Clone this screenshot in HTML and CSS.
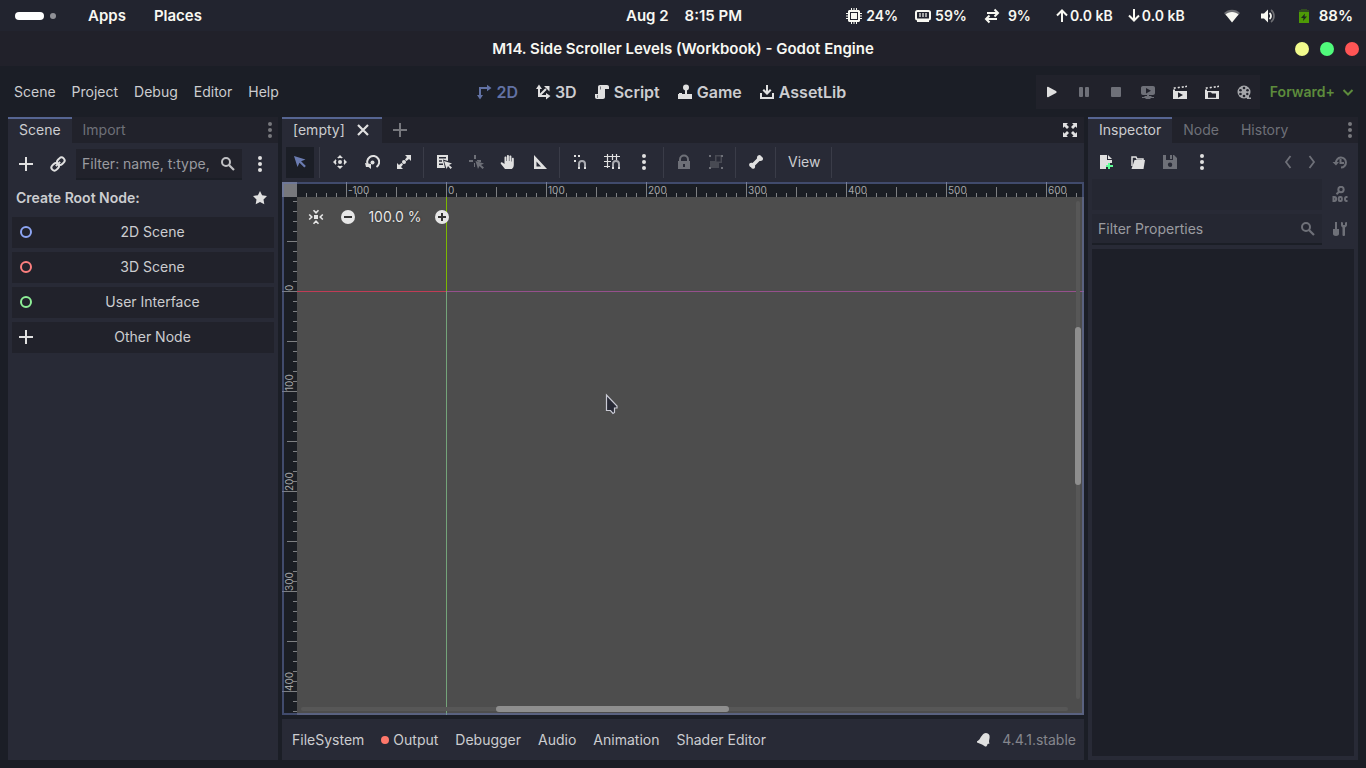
FILE: index.html
```html
<!DOCTYPE html>
<html lang="en">
<head>
<meta charset="utf-8">
<title>M14. Side Scroller Levels (Workbook) - Godot Engine</title>
<link rel="stylesheet" href="styles.css">
</head>
<body>
<svg class="sprite" aria-hidden="true">
  <symbol id="plus" viewBox="0 0 16 16"><path d="M7 1h2v6h6v2H9v6H7V9H1V7h6z"/></symbol>
  <symbol id="link" viewBox="0 0 16 16"><g fill="none" stroke="currentColor" stroke-width="2" transform="rotate(-45 8 8)"><rect x="0" y="5" width="8" height="6" rx="3"/><rect x="8" y="5" width="8" height="6" rx="3"/><path d="M5 8h6"/></g></symbol>
  <symbol id="search" viewBox="0 0 16 16"><circle cx="6" cy="6" r="4" fill="none" stroke="currentColor" stroke-width="2"/><path d="M9 9l5 5" stroke="currentColor" stroke-width="2.200"/></symbol>
  <symbol id="dots" viewBox="0 0 16 16"><circle cx="8" cy="2" r="2"/><circle cx="8" cy="8" r="2"/><circle cx="8" cy="14" r="2"/></symbol>
  <symbol id="star" viewBox="0 0 16 16"><path d="M8 1l2.100 4.300 4.900.7-3.500 3.400.8 4.900L8 12.100l-4.300 2.200.8-4.900L1 6l4.900-.7z"/></symbol>
  <symbol id="ring" viewBox="0 0 16 16"><circle cx="8" cy="8" r="5" fill="none" stroke="currentColor" stroke-width="2"/></symbol>
  <symbol id="close" viewBox="0 0 16 16"><path d="M3 3l10 10M13 3L3 13" stroke="currentColor" stroke-width="2.200"/></symbol>
  <symbol id="expand" viewBox="0 0 16 16"><path d="M1 1h5L4.500 2.500 7 5 5 7 2.500 4.500 1 6zM15 1v5l-1.500-1.500L11 7 9 5l2.500-2.500L10 1zM1 15v-5l1.500 1.500L5 9l2 2-2.500 2.500L6 15zM15 15h-5l1.500-1.500L9 11l2-2 2.500 2.500L15 10z"/></symbol>
  <symbol id="select" viewBox="0 0 16 16"><path d="M2 2l3.500 11 2-4.200 4.800 4.800 1.600-1.600-4.800-4.700L13.500 5.500z"/></symbol>
  <symbol id="move" viewBox="0 0 16 16"><circle cx="8" cy="8" r="2"/><path d="M8 1L5 4h1v1h4V4h1zM8 15l-3-3h1v-1h4v1h1zM1 8l3-3v1h1v4H4v1zM15 8l-3-3v1h-1v4h1v1z"/><circle cx="8" cy="8" r="3.400" fill="none" stroke="#282a36" stroke-width="1.200"/></symbol>
  <symbol id="rotate" viewBox="0 0 16 16"><circle cx="8.500" cy="8.500" r="2"/><path d="M4.300 11.500A6 6 0 1 1 12.500 13" fill="none" stroke="currentColor" stroke-width="2"/><path d="M1 9l6 1v5l-2.500-2H2z"/></symbol>
  <symbol id="scale" viewBox="0 0 16 16"><circle cx="8" cy="8" r="2"/><path d="M9 1h6v6l-2-2-2.500 2L9 5.500 11 3zM1 9v6h6l-2-2 2-2.500L5.500 9 3 11z"/></symbol>
  <symbol id="list" viewBox="0 0 16 16"><path fill-rule="evenodd" d="M1 1h11v6l-5-1.500L9 14H1zM3 3v1.500h7V3zm0 3.200v1.500h3V6.200zm0 3.200v1.500h4V9.400z"/><path d="M8 7l2.500 8 1.500-3 2.500 3 1.500-1.500-3-2.500 3-1.500z"/></symbol>
  <symbol id="pivot" viewBox="0 0 16 16"><path d="M6 1h2v4H6zM1 6h4v2H1zM9 6h4v2H9zM6 9h1v4H6zM7.500 7l2.500 8 1.500-3 3 3 1.500-1.500-3-2.500 3-1.500z"/></symbol>
  <symbol id="hand" viewBox="0 0 16 16"><path d="M5 15l-4-5c-1-1.500.8-2.500 1.800-1.300L4.500 10V3.500c0-1.300 1.900-1.300 1.900 0V7h.5V2c0-1.300 2-1.300 2 0v5h.5V2.500c0-1.300 2-1.300 2 0v5h.5V4.800c0-1.300 1.900-1.300 1.900 0V11c0 2-1 3-2 4z"/></symbol>
  <symbol id="ruler" viewBox="0 0 16 16"><path fill-rule="evenodd" d="M2 1v14h13zm2.500 6.500l4.500 5H4.500z"/></symbol>
  <symbol id="smart" viewBox="0 0 16 16"><path d="M2 1h2v2H2zM6 1h2v2H6zM2 6h2v2H2z"/><path d="M7 13v-3a3 3 0 0 1 6 0v3" fill="none" stroke="#a9aab0" stroke-width="2"/><path d="M6 13h2v2H6zM12 13h2v2h-2z"/></symbol>
  <symbol id="grid" viewBox="0 0 16 16"><path d="M3.500 0v14M8.500 0v6M12.500 0v6M0 2.500h16M0 7.500h7M0 12.500h6" stroke="currentColor" stroke-width="1.200"/><path d="M9 13v-3a3 3 0 0 1 6 0v3" fill="none" stroke="#a9aab0" stroke-width="2"/><path d="M8 13h2v2H8zM14 13h2v2h-2z"/></symbol>
  <symbol id="lock" viewBox="0 0 16 16"><path fill-rule="evenodd" d="M3 7V5.500a5 5 0 0 1 10 0V7h1v8H2V7zm2 0h6V5.500a3 3 0 0 0-6 0zm2 3v3h2v-3z"/></symbol>
  <symbol id="group" viewBox="0 0 16 16"><path d="M1 1h2v2H1zM13 1h2v2h-2zM1 13h2v2H1zM13 13h2v2h-2z"/><path opacity=".45" fill-rule="evenodd" d="M7 1h7v8h-3v5H2V7h5zm1.500 1.500v5h4v-5z"/></symbol>
  <symbol id="bone" viewBox="0 0 16 16"><path d="M10 1.500a2.500 2.500 0 0 1 3.500 1 2.500 2.500 0 0 1 1 3.800c-1 1-2.500.7-3 .7L7 11.500c.3 1.500 0 3-1.500 3.200A2.500 2.500 0 0 1 3 13.200 2.500 2.500 0 0 1 1.500 9.500c1-1 2.300-.7 3-.5L9 4.500c-.2-1 .1-2.300 1-3z"/></symbol>
  <symbol id="center" viewBox="0 0 16 16"><path d="M6 6h4v4H6z"/><path d="M5.500 1.200L8 3.800l2.500-2.600M5.500 14.800L8 12.200l2.500 2.600M1.200 5.500L3.800 8l-2.600 2.500M14.800 5.500L12.200 8l2.600 2.500" fill="none" stroke="currentColor" stroke-width="1.600"/></symbol>
  <symbol id="minus-round" viewBox="0 0 16 16"><circle cx="8" cy="8" r="7"/><path d="M4 7h8v2H4z" fill="#333"/></symbol>
  <symbol id="plus-round" viewBox="0 0 16 16"><circle cx="8" cy="8" r="7"/><path d="M7 4h2v3h3v2H9v3H7V9H4V7h3z" fill="#333"/></symbol>
  <symbol id="two" viewBox="0 0 16 16"><path d="M4 12V4h8" fill="none" stroke="currentColor" stroke-width="2"/><path d="M1 11h6l-3 4.500zM11 .8L15.500 4 11 7.200z"/></symbol>
  <symbol id="three" viewBox="0 0 16 16"><path d="M4 4v8h8M4 12l7-7" fill="none" stroke="currentColor" stroke-width="2"/><path d="M1 5l3-4.500L7 5zM11 9l4.500 3-4.500 3.500zM9 2h5.500v5.500z"/></symbol>
  <symbol id="script" viewBox="0 0 16 16"><path d="M6 1c-1.200 0-2 .8-2 2v7H1v3c0 1.200.8 2 2 2h6c1.200 0 2-.8 2-2V5h4V3c0-1.200-.8-2-2-2z"/><path d="M6.500 2.500v3M3.500 11v3" stroke="#777a80"/></symbol>
  <symbol id="game" viewBox="0 0 16 16"><circle cx="9" cy="3.500" r="3"/><path d="M8 5h2v5h5v5H1v-5h1V9h3v1h3z"/></symbol>
  <symbol id="asset" viewBox="0 0 16 16"><path d="M1 9h2v4h10V9h2v6H1z"/><path d="M7 1h2v6l2-2 1.500 1.500L8 11 3.500 6.500 5 5l2 2z"/></symbol>
  <symbol id="play" viewBox="0 0 16 16"><path d="M3 3.500c0-1 .8-1 1.500-.6l7.500 4c.8.500.8 1.700 0 2.200l-7.500 4c-.7.400-1.500.2-1.500-.6z"/></symbol>
  <symbol id="pause" viewBox="0 0 16 16"><rect x="3" y="3" width="4" height="10" rx="1"/><rect x="9" y="3" width="4" height="10" rx="1"/></symbol>
  <symbol id="stop" viewBox="0 0 16 16"><rect x="3" y="3" width="10" height="10" rx="1"/></symbol>
  <symbol id="remote" viewBox="0 0 16 16"><path fill-rule="evenodd" d="M3 2h10c1.200 0 2 .8 2 2v5c0 1.200-.8 2-2 2H9v1h2l1 1h2v1h-3l-1 1H6l-1-1H2v-1h2l1-1h2v-1H3c-1.200 0-2-.8-2-2V4c0-1.200.8-2 2-2zm3 2v5.500l5-2.700z"/></symbol>
  <symbol id="clap-play" viewBox="0 0 16 16"><path fill-rule="evenodd" d="M1 7h14v8H1zm5 1.200v5.600l5-2.800z"/><path d="M1.500 3.500l2-.5.500 1.500-2 .5zM5.500 3l2-.5.500 1.500-2 .5zM9.500 2.500l2-.5.500 1.500-2 .5zM13 2l2-.5v1.500l-1.500.500zM1 5.500h2V7H1z"/></symbol>
  <symbol id="clap-file" viewBox="0 0 16 16"><path fill-rule="evenodd" d="M1 7h14v8H1zm3 1.200v5.600h8V9.500H8L7 8.200z"/><path d="M1.500 3.500l2-.5.500 1.500-2 .5zM5.500 3l2-.5.500 1.500-2 .5zM9.500 2.500l2-.5.500 1.500-2 .5zM13 2l2-.5v1.500l-1.500.500zM1 5.500h2V7H1z"/></symbol>
  <symbol id="reel" viewBox="0 0 16 16"><circle cx="8" cy="8" r="6.500"/><path d="M10 10h3v3.500h2V15h-4z"/><g fill="#22232c"><circle cx="8" cy="4" r="1.300"/><circle cx="4.500" cy="6.200" r="1.300"/><circle cx="11.500" cy="6.200" r="1.300"/><circle cx="4.500" cy="10" r="1.300"/><circle cx="8" cy="12" r="1.300"/><circle cx="11.300" cy="10" r="1.200"/></g></symbol>
  <symbol id="chevron" viewBox="0 0 16 16"><path d="M3.500 6L8 10.500 12.500 6" fill="none" stroke="currentColor" stroke-width="2"/></symbol>
  <symbol id="new-file" viewBox="0 0 16 16"><path d="M2 1h7v5h5v3h-4v2H8v4H2zM10 1l4 4h-4z"/><path d="M10 9h2v2h3v2h-3v2h-2v-2H8v-2h2z" fill="#5fff97"/></symbol>
  <symbol id="folder" viewBox="0 0 16 16"><path d="M2 12V3h4l1 2h6v2" fill="none" stroke="currentColor" stroke-width="1.500"/><path d="M4.500 6H15l-1.500 9H1.500z"/></symbol>
  <symbol id="save" viewBox="0 0 16 16"><path fill-rule="evenodd" d="M1 1h3v5h7V1h1l3 3v11H1zm7 7.500a2.200 2.200 0 1 0 .1 4.400A2.200 2.200 0 0 0 8 8.500zM8 1h2v4H8z"/></symbol>
  <symbol id="back" viewBox="0 0 16 16"><path d="M10.500 2L6 8l4.500 6" fill="none" stroke="currentColor" stroke-width="1.800"/></symbol>
  <symbol id="forward" viewBox="0 0 16 16"><path d="M5.500 2L10 8l-4.500 6" fill="none" stroke="currentColor" stroke-width="1.800"/></symbol>
  <symbol id="history" viewBox="0 0 16 16"><path d="M4 9a5 5 0 1 1 5 4.500M8.500 5v4H12" fill="none" stroke="currentColor" stroke-width="2"/><path d="M.5 8h6.500L4 11.500z"/></symbol>
  <symbol id="docs" viewBox="0 0 16 16"><g fill="none" stroke="currentColor" stroke-width="2"><circle cx="9" cy="3.500" r="2.700"/><path d="M7.200 5.500L4.500 8.200"/><path d="M1.500 11h1c2.200 0 2.200 4 0 4h-1zM15.500 11h-1c-2 0-2 4 0 4h1"/><rect x="6.800" y="11" width="3" height="4" rx="1"/></g></symbol>
  <symbol id="tools" viewBox="0 0 16 16"><path d="M3 1h2v7h2v5c0 2.500-6 2.500-6 0V8h2zM9 1v3c0 1.300.7 2 1.500 2.500V14c0 1.300 2.500 1.300 2.500 0V6.500C14 6 15 5 15 4V1l-2 .5V4h-2V1.500z"/></symbol>
  <symbol id="bell" viewBox="0 0 16 16"><path d="M8 1.500c2-1.500 5 0 5.500 2 .5 2.500-.5 4-.5 6.500l.5 1.500-2 .5c0 2-2 3.500-3 2L6 12.500 1 10.500V9.300C4 8.500 4.500 4 8 1.500z"/></symbol>
  <symbol id="cpu" viewBox="0 0 16 16"><path fill-rule="evenodd" d="M5 0h1v2h1.500V0h1v2H10V0h1v2h2l1 1v2h2v1h-2v1.500h2v1h-2V10h2v1h-2v2l-1 1h-2v2h-1v-2H8.500v2h-1v-2H6v2H5v-2H3l-1-1v-2H0v-1h2V8.500H0v-1h2V6H0V5h2V3l1-1h2zM4 4v8h8V4z"/><path d="M5 5h6v6H5z"/></symbol>
  <symbol id="memory" viewBox="0 0 16 16"><rect x="1" y="3" width="14" height="8.500" rx="1.500" fill="none" stroke="currentColor" stroke-width="2"/><path d="M2 11h12v3H2z"/><path opacity=".6" d="M4 5h2v4H4zM7 5h2v4H7zM10 5h2v4h-2z"/></symbol>
  <symbol id="swap" viewBox="0 0 16 16"><path d="M3 5h11M10.500 1.500L14 5l-3.500 3.500M13 11H2M5.500 7.500L2 11l3.500 3.500" fill="none" stroke="currentColor" stroke-width="2"/></symbol>
  <symbol id="up" viewBox="0 0 16 16"><path d="M8 14V3M3 7.500l5-5 5 5" fill="none" stroke="currentColor" stroke-width="2"/></symbol>
  <symbol id="down" viewBox="0 0 16 16"><path d="M8 1v11M3 7.500l5 5 5-5" fill="none" stroke="currentColor" stroke-width="2"/></symbol>
  <symbol id="wifi" viewBox="0 0 16 16"><path opacity=".35" d="M0 5c4-4.500 12-4.500 16 0l-2 2.500H2z"/><path d="M1.500 6.500c3-3.500 10-3.500 13 0L8 14.500z"/></symbol>
  <symbol id="volume" viewBox="0 0 16 16"><path d="M1 5.500h3L8 1.500v13l-4-4H1z"/><path d="M9.500 5c2 1.500 2 4.500 0 6" fill="none" stroke="currentColor" stroke-width="1.800"/><path opacity=".35" d="M11 2c4 3 4 9 0 12" fill="none" stroke="currentColor" stroke-width="1.600"/></symbol>
  <symbol id="battery" viewBox="0 0 16 16"><path opacity=".35" d="M5 1h6v1h2v3H3V2h2z"/><path d="M3 4h10v11H3z"/><path d="M9 5.500L5 10h2.500L7 13l4-4.500H8.500z" fill="#1c2a1c"/></symbol>
</svg>

<header class="sysbar">
  <nav class="sysbar-left">
    <span class="spaces"><i class="space-now"></i><i class="space-other"></i></span>
    <button class="sys-item">Apps</button>
    <button class="sys-item">Places</button>
  </nav>
  <div class="clock"><span>Aug 2</span><span>8:15 PM</span></div>
  <div class="sysbar-right">
    <span class="stat"><svg class="icon"><use href="#cpu"/></svg>24%</span>
    <span class="stat"><svg class="icon"><use href="#memory"/></svg>59%</span>
    <span class="stat wide"><svg class="icon"><use href="#swap"/></svg>9%</span>
    <span class="net"><span class="rate"><svg class="icon"><use href="#up"/></svg>0.0 kB</span><span class="rate"><svg class="icon"><use href="#down"/></svg>0.0 kB</span></span>
    <span class="tray"><svg class="icon"><use href="#wifi"/></svg><svg class="icon"><use href="#volume"/></svg><span class="power"><svg class="icon battery"><use href="#battery"/></svg>88%</span></span>
  </div>
</header>

<div class="titlebar">
  <h1 class="title">M14. Side Scroller Levels (Workbook) - Godot Engine</h1>
  <div class="window-buttons">
    <button class="win minimize" aria-label="Minimize"></button>
    <button class="win maximize" aria-label="Maximize"></button>
    <button class="win shut" aria-label="Close"></button>
  </div>
</div>

<div class="editor">
  <div class="menubar">
    <nav class="menus">
      <button>Scene</button><button>Project</button><button>Debug</button><button>Editor</button><button>Help</button>
    </nav>
    <nav class="modes">
      <button class="current"><svg class="icon"><use href="#two"/></svg>2D</button>
      <button><svg class="icon"><use href="#three"/></svg>3D</button>
      <button><svg class="icon"><use href="#script"/></svg>Script</button>
      <button><svg class="icon"><use href="#game"/></svg>Game</button>
      <button><svg class="icon"><use href="#asset"/></svg>AssetLib</button>
    </nav>
    <div class="run">
      <div class="run-buttons">
        <button aria-label="Play"><svg class="icon"><use href="#play"/></svg></button>
        <button class="off" aria-label="Pause"><svg class="icon"><use href="#pause"/></svg></button>
        <button class="off" aria-label="Stop"><svg class="icon"><use href="#stop"/></svg></button>
        <button class="off" aria-label="Remote deploy"><svg class="icon"><use href="#remote"/></svg></button>
        <button aria-label="Play scene"><svg class="icon"><use href="#clap-play"/></svg></button>
        <button aria-label="Play custom scene"><svg class="icon"><use href="#clap-file"/></svg></button>
        <button class="dim" aria-label="Movie maker"><svg class="icon"><use href="#reel"/></svg></button>
      </div>
      <button class="renderer">Forward+<svg class="icon"><use href="#chevron"/></svg></button>
    </div>
  </div>

  <main class="docks">
    <section class="dock">
      <div class="tabs">
        <button class="tab active">Scene</button><button class="tab">Import</button>
        <button class="tab-menu" aria-label="Dock options"><svg class="icon"><use href="#dots"/></svg></button>
      </div>
      <div class="scene-body">
        <div class="tools">
          <button class="tool" aria-label="Add node"><svg class="icon"><use href="#plus"/></svg></button>
          <button class="tool" aria-label="Instance scene"><svg class="icon"><use href="#link"/></svg></button>
          <label class="field"><input type="text" aria-label="Filter nodes" placeholder="Filter: name, t:type,"><svg class="icon"><use href="#search"/></svg></label>
          <button class="tool" aria-label="More options"><svg class="icon"><use href="#dots"/></svg></button>
        </div>
        <div class="root-head"><h2>Create Root Node:</h2><button class="tool" aria-label="Favorites"><svg class="icon"><use href="#star"/></svg></button></div>
        <button class="root-button"><svg class="icon blue"><use href="#ring"/></svg><span>2D Scene</span></button>
        <button class="root-button"><svg class="icon red"><use href="#ring"/></svg><span>3D Scene</span></button>
        <button class="root-button"><svg class="icon green"><use href="#ring"/></svg><span>User Interface</span></button>
        <button class="root-button"><svg class="icon"><use href="#plus"/></svg><span>Other Node</span></button>
      </div>
    </section>

    <div class="middle">
      <section class="dock canvas-dock">
        <div class="tabs">
          <button class="tab active scene-tab">[empty]<svg class="icon"><use href="#close"/></svg></button>
          <button class="tab-add" aria-label="New scene"><svg class="icon"><use href="#plus"/></svg></button>
          <button class="tab-menu bright" aria-label="Distraction free mode"><svg class="icon"><use href="#expand"/></svg></button>
        </div>
        <div class="tools canvas-tools">
          <button class="tool pressed" aria-label="Select"><svg class="icon"><use href="#select"/></svg></button>
          <i class="sep"></i>
          <button class="tool" aria-label="Move"><svg class="icon"><use href="#move"/></svg></button>
          <button class="tool" aria-label="Rotate"><svg class="icon"><use href="#rotate"/></svg></button>
          <button class="tool" aria-label="Scale"><svg class="icon"><use href="#scale"/></svg></button>
          <i class="sep"></i>
          <button class="tool" aria-label="List selectable nodes"><svg class="icon"><use href="#list"/></svg></button>
          <button class="tool off" aria-label="Change pivot"><svg class="icon"><use href="#pivot"/></svg></button>
          <button class="tool" aria-label="Pan"><svg class="icon"><use href="#hand"/></svg></button>
          <button class="tool" aria-label="Ruler"><svg class="icon"><use href="#ruler"/></svg></button>
          <i class="sep"></i>
          <button class="tool" aria-label="Smart snap"><svg class="icon"><use href="#smart"/></svg></button>
          <button class="tool" aria-label="Grid snap"><svg class="icon"><use href="#grid"/></svg></button>
          <button class="tool" aria-label="Snapping options"><svg class="icon"><use href="#dots"/></svg></button>
          <i class="sep"></i>
          <button class="tool off" aria-label="Lock"><svg class="icon"><use href="#lock"/></svg></button>
          <button class="tool off" aria-label="Group"><svg class="icon"><use href="#group"/></svg></button>
          <i class="sep"></i>
          <button class="tool" aria-label="Skeleton options"><svg class="icon"><use href="#bone"/></svg></button>
          <i class="sep"></i>
          <button class="view">View</button>
          <i class="sep"></i>
        </div>
        <div class="viewport">
          <div class="corner"></div>
          <div class="ruler-x"><span>-100</span><span>0</span><span>100</span><span>200</span><span>300</span><span>400</span><span>500</span><span>600</span></div>
          <div class="ruler-y"><span>0</span><span>100</span><span>200</span><span>300</span><span>400</span></div>
          <div class="canvas">
            <i class="axis-x"></i><i class="axis-y"></i>
            <div class="zoom">
              <button aria-label="Center view"><svg class="icon"><use href="#center"/></svg></button>
              <button aria-label="Zoom out"><svg class="icon"><use href="#minus-round"/></svg></button>
              <button class="zoom-value">100.0 %</button>
              <button aria-label="Zoom in"><svg class="icon"><use href="#plus-round"/></svg></button>
            </div>
            <svg class="pointer" viewBox="0 0 14 22"><path d="M1.500 2v15.500h4l2.500 3 1.500-1v-4.500h2.500v-2z" fill="#282a36" stroke="#c9cad4" stroke-width="1.200"/></svg>
            <div class="scroll-x"><i></i></div>
            <div class="scroll-y"><i></i></div>
          </div>
        </div>
      </section>
      <footer class="bottom">
        <button>FileSystem</button><button><i class="alert"></i>Output</button><button>Debugger</button><button>Audio</button><button>Animation</button><button>Shader Editor</button>
        <span class="status"><button aria-label="Notifications"><svg class="icon"><use href="#bell"/></svg></button><a class="version" href="#">4.4.1.stable</a></span>
      </footer>
    </div>

    <section class="dock">
      <div class="tabs">
        <button class="tab active">Inspector</button><button class="tab">Node</button><button class="tab">History</button>
        <button class="tab-menu" aria-label="Dock options"><svg class="icon"><use href="#dots"/></svg></button>
      </div>
      <div class="inspector-body">
        <div class="tools inspector-tools">
          <button class="tool" aria-label="New resource"><svg class="icon"><use href="#new-file"/></svg></button>
          <button class="tool" aria-label="Load resource"><svg class="icon"><use href="#folder"/></svg></button>
          <button class="tool off" aria-label="Save resource"><svg class="icon"><use href="#save"/></svg></button>
          <button class="tool" aria-label="Resource options"><svg class="icon"><use href="#dots"/></svg></button>
          <button class="tool narrow push off" aria-label="Previous object"><svg class="icon"><use href="#back"/></svg></button>
          <button class="tool narrow off" aria-label="Next object"><svg class="icon"><use href="#forward"/></svg></button>
          <button class="tool off" aria-label="Object history"><svg class="icon"><use href="#history"/></svg></button>
        </div>
        <div class="tools"><button class="object-path" aria-label="Edited object"></button><button class="tool off" aria-label="Open documentation"><svg class="icon"><use href="#docs"/></svg></button></div>
        <div class="tools"><label class="field muted"><input type="text" aria-label="Filter properties" placeholder="Filter Properties"><svg class="icon"><use href="#search"/></svg></label><button class="tool off" aria-label="Property tools"><svg class="icon"><use href="#tools"/></svg></button></div>
        <div class="properties"></div>
      </div>
    </section>
  </main>
</div>
</body>
</html>
```

FILE: styles.css
```css
:root {
  --base: #1b1e26;
  --bar: #21222b;
  --panel: #282a36;
  --accent: #566592;
  --text: #cccdd0;
  --icon: #e0e0e0;
  --off: #6e7078;
}
* { box-sizing: border-box; }
body {
  margin: 0;
  height: 100vh;
  display: flex;
  flex-direction: column;
  background: var(--base);
  color: var(--text);
  font: 14px/20px Inter, "Noto Sans", sans-serif;
  overflow: hidden;
}
button, input { font: inherit; color: inherit; background: none; border: 0; padding: 0; }
button { display: inline-flex; align-items: center; justify-content: center; white-space: nowrap; }
.sprite { position: absolute; width: 0; height: 0; }
.icon { width: 16px; height: 16px; flex: none; fill: currentColor; display: block; }

.sysbar {
  display: grid;
  grid-template-columns: 1fr auto 1fr;
  align-items: center;
  height: 31px;
  flex: none;
  padding: 0 13px 0 15px;
  background: #22242f;
  color: #f8f8f2;
  font-size: 15px;
  font-weight: 600;
}
.sysbar-left, .sysbar-right, .clock, .spaces, .stat, .net, .rate, .tray, .power { display: flex; align-items: center; }
.sysbar-left { gap: 28px; }
.spaces { gap: 6px; margin-right: 4px; }
.space-now { width: 29px; height: 8px; border-radius: 4px; background: #fff; }
.space-other { width: 6px; height: 6px; border-radius: 3px; background: #909197; }
.clock { gap: 16px; }
.sysbar-right { justify-content: flex-end; gap: 17px; }
.stat, .rate { font-size: 14px; gap: 4px; }
.wide { gap: 8px; }
.net { gap: 13px; padding-left: 6px; }
.rate { gap: 0; }
.tray { gap: 20px; padding-left: 22px; font-size: 15px; }
.power { gap: 7px; }
.battery { color: #4e9a06; }

.titlebar {
  display: grid;
  grid-template-columns: 1fr auto 1fr;
  align-items: center;
  height: 35px;
  flex: none;
  padding: 0 7px;
  background: #21212a;
}
.title { grid-column: 2; margin: 0; font-size: 15px; line-height: 20px; font-weight: 600; color: #f8f8f2; }
.window-buttons { display: flex; gap: 11px; justify-self: end; }
.win { width: 14px; height: 14px; border-radius: 50%; }
.minimize { background: #f1fa8c; }
.maximize { background: #50fa7b; }
.shut { background: #ff5555; }

.editor { flex: 1; min-height: 0; display: flex; flex-direction: column; padding: 0 8px 8px; }
.menubar { display: flex; align-items: center; justify-content: space-between; height: 51px; flex: none; }
.menus { display: flex; gap: 16px; padding-left: 6px; }
.modes { display: flex; gap: 17px; margin-left: 8px; font-size: 16px; font-weight: 600; }
.modes button { gap: 4px; }
.modes .icon { color: var(--icon); }
.modes .current, .modes .current .icon { color: #6272a4; }
.run { display: flex; align-items: center; gap: 10px; }
.run-buttons { display: flex; height: 34px; background: var(--bar); color: var(--icon); }
.run-buttons button { width: 32px; }
.run-buttons .off, .tool.off { color: var(--off); }
.run-buttons .dim { color: #a5a6aa; }
.renderer { gap: 5px; padding-right: 2px; font-weight: 600; color: #5d8c3c; }

.docks { flex: 1; min-height: 0; display: grid; grid-template-columns: 270px minmax(0, 1fr) 270px; gap: 4px; }
.dock { display: flex; flex-direction: column; background: var(--panel); min-height: 0; }
.tabs { display: flex; height: 26px; flex: none; background: var(--bar); }
.tab { padding: 0 11px 2px; border-top: 2px solid transparent; color: var(--off); }
.tab.active { background: var(--panel); border-top-color: var(--accent); color: var(--text); }
.scene-tab { gap: 10px; }
.scene-tab .icon { color: var(--icon); }
.tab-add { width: 36px; color: #77787d; }
.tab-menu { margin-left: auto; width: 16px; color: #77787d; }
.tab-menu.bright { width: 28px; color: var(--icon); }

.tools { display: flex; gap: 4px; height: 31px; flex: none; }
.tool { width: 28px; flex: none; padding-bottom: 1px; color: var(--icon); }
.scene-body { display: flex; flex-direction: column; gap: 4px; padding: 6px 4px; }
.field { display: flex; align-items: center; flex: 1; min-width: 0; padding: 0 6px; background: var(--bar); border-bottom: 2px solid var(--base); }
.field input { flex: 1; min-width: 0; width: 0; outline: 0; }
.field input::placeholder { color: #9a9ba0; opacity: 1; }
.field .icon { color: #c0c1c4; }
.root-head { display: flex; align-items: center; justify-content: space-between; height: 29px; padding-left: 4px; }
.root-head h2 { margin: 0; padding-bottom: 1px; font-size: 14px; line-height: 20px; font-weight: 600; }
.root-button { height: 31px; padding: 0 6px 1px; background: var(--bar); }
.root-button span { flex: 1; padding-left: 3px; }
.root-button .icon { color: var(--icon); }
.root-button .blue { color: #8da5f3; }
.root-button .red { color: #fc7f7f; }
.root-button .green { color: #8eef97; }

.middle { display: flex; flex-direction: column; gap: 4px; min-width: 0; }
.canvas-dock { flex: 1; }
.canvas-tools { height: 39px; padding: 4px; }
.pressed { background: var(--base); color: #6a7bb0; }
.sep { width: 4px; flex: none; background: linear-gradient(#3a3c48, #3a3c48) 1px 0 / 1px 100% no-repeat; }
.view { padding: 0 6px 1px; }

.viewport { position: relative; flex: 1; min-height: 0; display: grid; grid-template: 15px minmax(0, 1fr) / 15px minmax(0, 1fr); background: #1b1e24; }
.viewport::after { content: ""; position: absolute; inset: 0; border: 2px solid rgba(103, 120, 180, .5); pointer-events: none; }
.corner { background: #77787c; }
.ruler-x, .ruler-y { overflow: hidden; display: flex; font-size: 10px; line-height: 15px; color: #a5a6a8; --tick: #7d7f82; }
.ruler-x {
  padding-left: 49px;
  background:
    repeating-linear-gradient(90deg, var(--tick) 0 1px, transparent 1px 100px) 49px 0 / 100% 15px no-repeat,
    repeating-linear-gradient(90deg, var(--tick) 0 1px, transparent 1px 50px) 49px 5px / 100% 10px no-repeat,
    repeating-linear-gradient(90deg, transparent 0 9px, var(--tick) 9px 10px) 0 11px / 100% 4px no-repeat;
}
.ruler-x span { width: 100px; flex: none; padding: 1px 0 0 2px; }
.ruler-y {
  flex-direction: column;
  background:
    repeating-linear-gradient(var(--tick) 0 1px, transparent 1px 100px) 0 94px / 15px 100% no-repeat,
    repeating-linear-gradient(var(--tick) 0 1px, transparent 1px 50px) 5px 44px / 10px 100% no-repeat,
    repeating-linear-gradient(transparent 0 4px, var(--tick) 4px 5px, transparent 5px 10px) 11px 0 / 4px 100% no-repeat;
}
.ruler-y span { height: 100px; flex: none; writing-mode: vertical-rl; transform: rotate(180deg); width: 17px; }
.ruler-y span:first-child { height: 94px; }
.canvas { position: relative; background: #4d4d4d; overflow: hidden; }
.axis-x { position: absolute; left: 0; right: 0; top: 94px; height: 1px; background: linear-gradient(90deg, #c03c56 149px, #95508c 149px); }
.axis-y { position: absolute; top: 0; bottom: 0; left: 149px; width: 1px; background: linear-gradient(#7cb800 94px, #74a47a 94px); }
.zoom { position: absolute; left: 5px; top: 4px; height: 32px; display: flex; gap: 4px; color: #e6e6e6; }
.zoom button { width: 28px; text-shadow: 0 0 2px #222; }
.zoom .zoom-value { width: 58px; }
.pointer { position: absolute; left: 308px; top: 196px; width: 14px; height: 22px; }
.scroll-x, .scroll-y { position: absolute; display: flex; border-radius: 3px; background: #575757; }
.scroll-x { left: 4px; right: 16px; bottom: 4px; height: 4px; align-items: center; }
.scroll-x i { width: 233px; height: 6px; margin-left: 195px; flex: none; border-radius: 3px; background: #8e8e8e; }
.scroll-y { top: 4px; bottom: 16px; right: 4px; width: 4px; flex-direction: column; align-items: center; }
.scroll-y i { width: 6px; height: 158px; margin-top: 126px; flex: none; border-radius: 3px; background: #8e8e8e; }

.bottom { display: flex; align-items: center; gap: 17px; height: 41px; flex: none; padding: 0 8px 0 10px; background: var(--panel); }
.alert { width: 8px; height: 8px; margin-right: 4px; border-radius: 50%; background: #ff786b; }
.status { display: flex; align-items: center; gap: 10px; margin-left: auto; color: var(--icon); }
.version { color: #85868d; text-decoration: none; }

.inspector-body { flex: 1; min-height: 0; display: flex; flex-direction: column; gap: 4px; padding: 4px; }
.inspector-tools { margin-bottom: -3px; }
.push { margin-left: auto; }
.narrow { width: 20px; }
.object-path { flex: 1; background: #252732; }
.muted { background: #252732; }
.muted .icon { color: var(--off); }
.properties { flex: 1; background: #1d1f28; }
```
